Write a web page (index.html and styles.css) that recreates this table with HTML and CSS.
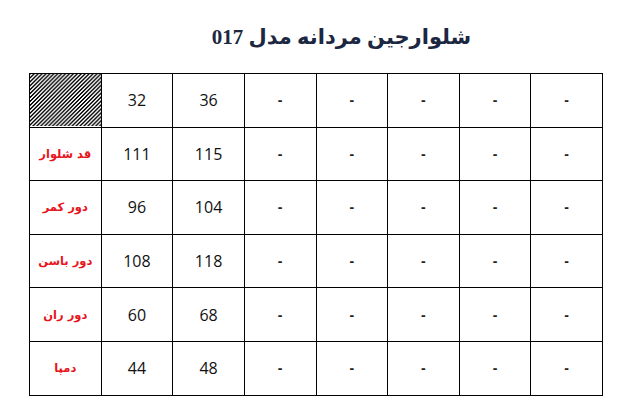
FILE: index.html
```html
<!DOCTYPE html>
<html lang="fa">
<head>
<meta charset="utf-8">
<title>شلوارجین مردانه مدل 017</title>
<link rel="stylesheet" href="styles.css">
</head>
<body>
<div class="page">
  <h1 class="title" dir="rtl">شلوارجین مردانه مدل 017</h1>
  <div class="table-wrap">
    <table class="sizes">
      <tbody>
        <tr><td class="hatch"><svg class="hatch-svg" width="72" height="52" viewBox="0 0 72 52" aria-hidden="true"><defs><pattern id="hp" width="4" height="4" patternUnits="userSpaceOnUse"><rect x="0" y="3" width="1" height="1"/><rect x="1" y="2" width="1" height="1"/><rect x="2" y="1" width="1" height="1"/><rect x="3" y="0" width="1" height="1"/><rect x="0" y="2" width="1" height="1"/><rect x="1" y="1" width="1" height="1"/><rect x="2" y="0" width="1" height="1"/><rect x="3" y="3" width="1" height="1"/></pattern></defs><rect width="72" height="52" fill="#fff"/><rect width="72" height="52" fill="url(#hp)" shape-rendering="crispEdges"/></svg></td><td>32</td><td>36</td><td class="dash">-</td><td class="dash">-</td><td class="dash">-</td><td class="dash">-</td><td class="dash">-</td></tr>
        <tr><td class="label">قد شلوار</td><td>111</td><td>115</td><td class="dash">-</td><td class="dash">-</td><td class="dash">-</td><td class="dash">-</td><td class="dash">-</td></tr>
        <tr><td class="label">دور کمر</td><td>96</td><td>104</td><td class="dash">-</td><td class="dash">-</td><td class="dash">-</td><td class="dash">-</td><td class="dash">-</td></tr>
        <tr><td class="label">دور باسن</td><td>108</td><td>118</td><td class="dash">-</td><td class="dash">-</td><td class="dash">-</td><td class="dash">-</td><td class="dash">-</td></tr>
        <tr><td class="label">دور ران</td><td>60</td><td>68</td><td class="dash">-</td><td class="dash">-</td><td class="dash">-</td><td class="dash">-</td><td class="dash">-</td></tr>
        <tr><td class="label">دمپا</td><td>44</td><td>48</td><td class="dash">-</td><td class="dash">-</td><td class="dash">-</td><td class="dash">-</td><td class="dash">-</td></tr>
      </tbody>
    </table>
  </div>
</div>
</body>
</html>
```
FILE: styles.css
```css
html, body {
  margin: 0;
  padding: 0;
  background: #ffffff;
}
.page {
  width: 621px;
  height: 409px;
  overflow: hidden;
}
.title {
  margin: 0;
  height: 73px;
  box-sizing: border-box;
  padding: 24px 0 0 62px;
  text-align: center;
  font-family: "Liberation Serif", "DejaVu Sans", serif;
  font-weight: bold;
  font-size: 21px;
  line-height: 27px;
  color: #1c2741;
}
.table-wrap {
  padding-left: 29px;
}
.sizes {
  border-collapse: collapse;
  table-layout: fixed;
  width: 574px;
}
.sizes td {
  border: 1px solid #000;
  height: 52.6px;
  padding: 0;
  text-align: center;
  vertical-align: middle;
  font-family: "Open Sans", "Liberation Sans", sans-serif;
  font-size: 16px;
  color: #111;
}
.sizes td.dash {
  font-family: "Liberation Sans", sans-serif;
  font-weight: bold;
  font-size: 14px;
  color: #222;
}
.sizes td.label {
  direction: rtl;
  font-family: "DejaVu Sans", sans-serif;
  font-weight: bold;
  font-size: 11.5px;
  color: #e8141c;
}
.sizes td.hatch {
  overflow: hidden;
  vertical-align: top;
}
.hatch-svg {
  display: block;
  width: 100%;
  height: 52px;
}
```
